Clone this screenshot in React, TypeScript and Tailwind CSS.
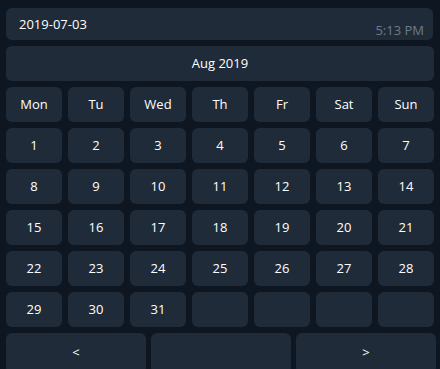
import React from "react";

const days = ["Mon", "Tu", "Wed", "Th", "Fr", "Sat", "Sun"];
const cells: string[] = [];
for (let i = 1; i <= 31; i++) cells.push(String(i));
while (cells.length < 35) cells.push("");

const btn = "bg-[#1f2b39] rounded-[6px] flex items-center justify-center text-white text-[13px] font-medium";

export default function App() {
  return (
    <div
      className="w-[440px] h-[369px] bg-[#0e1621] overflow-hidden pt-[8px] px-[6px]"
      style={{ fontFamily: '"Open Sans", "Noto Sans", sans-serif' }}
    >
      <div className="w-[427px] h-[32px] bg-[#1f2b39] rounded-[6px] flex justify-between px-[13px]">
        <span className="text-white text-[13px] leading-none mt-[10px]">2019-07-03</span>
        <span className="text-[#6c7b8b] text-[13px] leading-none mt-[16px] -mr-[4px]">5:13 PM</span>
      </div>
      <div className={`${btn} w-[428px] h-[35px] mt-[6px]`}>Aug 2019</div>
      <div className="grid grid-cols-[repeat(7,56px)] auto-rows-[35px] gap-[6px] mt-[6px]">
        {days.map((d) => (
          <div key={d} className={btn}>{d}</div>
        ))}
        {cells.map((c, i) => (
          <div key={i} className={btn}>{c}</div>
        ))}
      </div>
      <div className="grid grid-cols-[140px_140px_140px] gap-[5px] mt-[6px] h-[40px]">
        <div className={btn}>&lt;</div>
        <div className={btn}></div>
        <div className={btn}>&gt;</div>
      </div>
    </div>
  );
}
